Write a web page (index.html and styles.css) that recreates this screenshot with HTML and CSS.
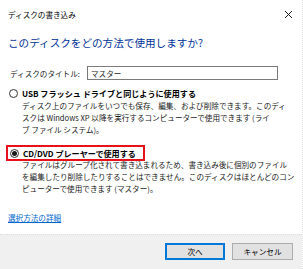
FILE: index.html
```html
<!doctype html>
<html>
<head>
  <title>ディスクの書き込み</title>
  <meta charset="utf-8">
  <link rel="stylesheet" href="styles.css">
</head>
<body>
  <div class="dialog">
    <div class="titlebar">
      <span>ディスクの書き込み</span>
      <svg class="close" width="9" height="9" viewBox="0 0 9 9">
        <path d="M1 1 L8 8 M8 1 L1 8" stroke="#1a1a1a" stroke-width="1" fill="none"/>
      </svg>
    </div>
    <div class="content">
      <h1>このディスクをどの方法で使用しますか?</h1>
      <div class="title-row">
        <label for="disc">ディスクのタイトル:</label>
        <input type="text" id="disc" value="マスター">
      </div>

      <div class="option">
        <span class="radio"></span>
        <span>USB フラッシュ ドライブと同じように使用する</span>
      </div>
      <p class="desc">ディスク上のファイルをいつでも保存、編集、および削除できます。このディ<br>スクは Windows XP 以降を実行するコンピューターで使用できます (ライ<br>ブ ファイル システム)。</p>

      <div class="option" id="active">
        <span class="radio checked"></span>
        <span>CD/DVD プレーヤーで使用する</span>
      </div>
      <p class="desc desc2">ファイルはグループ化されて書き込まれるため、書き込み後に個別のファイル<br>を編集したり削除したりすることはできません。このディスクはほとんどのコン<br>ピューターで使用できます (マスター)。</p>

      <a class="more" href="#">選択方法の詳細</a>
    </div>
    <div class="footer">
      <button class="default">次へ</button>
      <button>キャンセル</button>
    </div>
  </div>
</body>
</html>
```

FILE: styles.css
```css
body{
  margin:0;
  background:#fff;
  font-family:"Noto Sans CJK JP", "Liberation Sans", sans-serif;
  font-size:7.6px;
  color:#1a1a1a;
}
.dialog{
  width:303px;
  height:269px;
  display:flex;
  flex-direction:column;
  box-sizing:border-box;
  border-right:1px dotted #e4e4e4;
}
.titlebar{
  height:28px;
  display:flex;
  justify-content:space-between;
  align-items:center;
  padding:0 9px 0 8px;
  color:#000;
}
.content{
  flex:1;
  padding:0 8px;
}
h1{
  margin:8px 0 0;
  font-size:10.6px;
  line-height:14px;
  font-weight:normal;
  color:#003399;
}
.title-row{
  display:flex;
  align-items:center;
  margin-top:16px;
}
.title-row label{
  width:77px;
  padding-left:2px;
}
input{
  width:191px;
  height:14px;
  box-sizing:border-box;
  border:1px solid #7a7a7a;
  padding:0 3px;
  font-family:inherit;
  font-size:7.6px;
  color:#1a1a1a;
}
.option{
  display:flex;
  align-items:center;
  height:12px;
  margin-top:7px;
  font-size:8.1px;
  font-weight:bold;
  color:#000;
}
.radio{
  width:9px;
  height:9px;
  box-sizing:border-box;
  border:1px solid #333;
  border-radius:50%;
  margin:0 4px 0 1px;
  display:flex;
  align-items:center;
  justify-content:center;
}
.radio.checked::after{
  content:"";
  width:5px;
  height:5px;
  border-radius:50%;
  background:#1a1a1a;
}
.desc{
  margin:1px 0 0;
  padding-left:14px;
  line-height:12px;
  white-space:nowrap;
}
#active{
  display:inline-flex;
  border:2px solid #e8101a;
  padding:0 7px 0 1px;
  margin:9px 0 0 -2px;
}
.desc2{
  margin-top:-2px;
}
.more{
  display:inline-block;
  margin-top:17px;
  line-height:12px;
  color:#0066cc;
  text-decoration:underline;
}
.footer{
  height:35px;
  box-sizing:border-box;
  background:#f0f0f0;
  border-top:1px dotted #dcdcdc;
  display:flex;
  justify-content:flex-end;
  align-items:flex-start;
  gap:7px;
  padding:8px 9px 0 0;
}
button{
  width:61px;
  height:17px;
  background:#e1e1e1;
  border:1px solid #adadad;
  font-family:inherit;
  font-size:7.6px;
  color:#000;
  padding:0;
}
button.default{
  width:60px;
  border:2px solid #0078d7;
}
```
